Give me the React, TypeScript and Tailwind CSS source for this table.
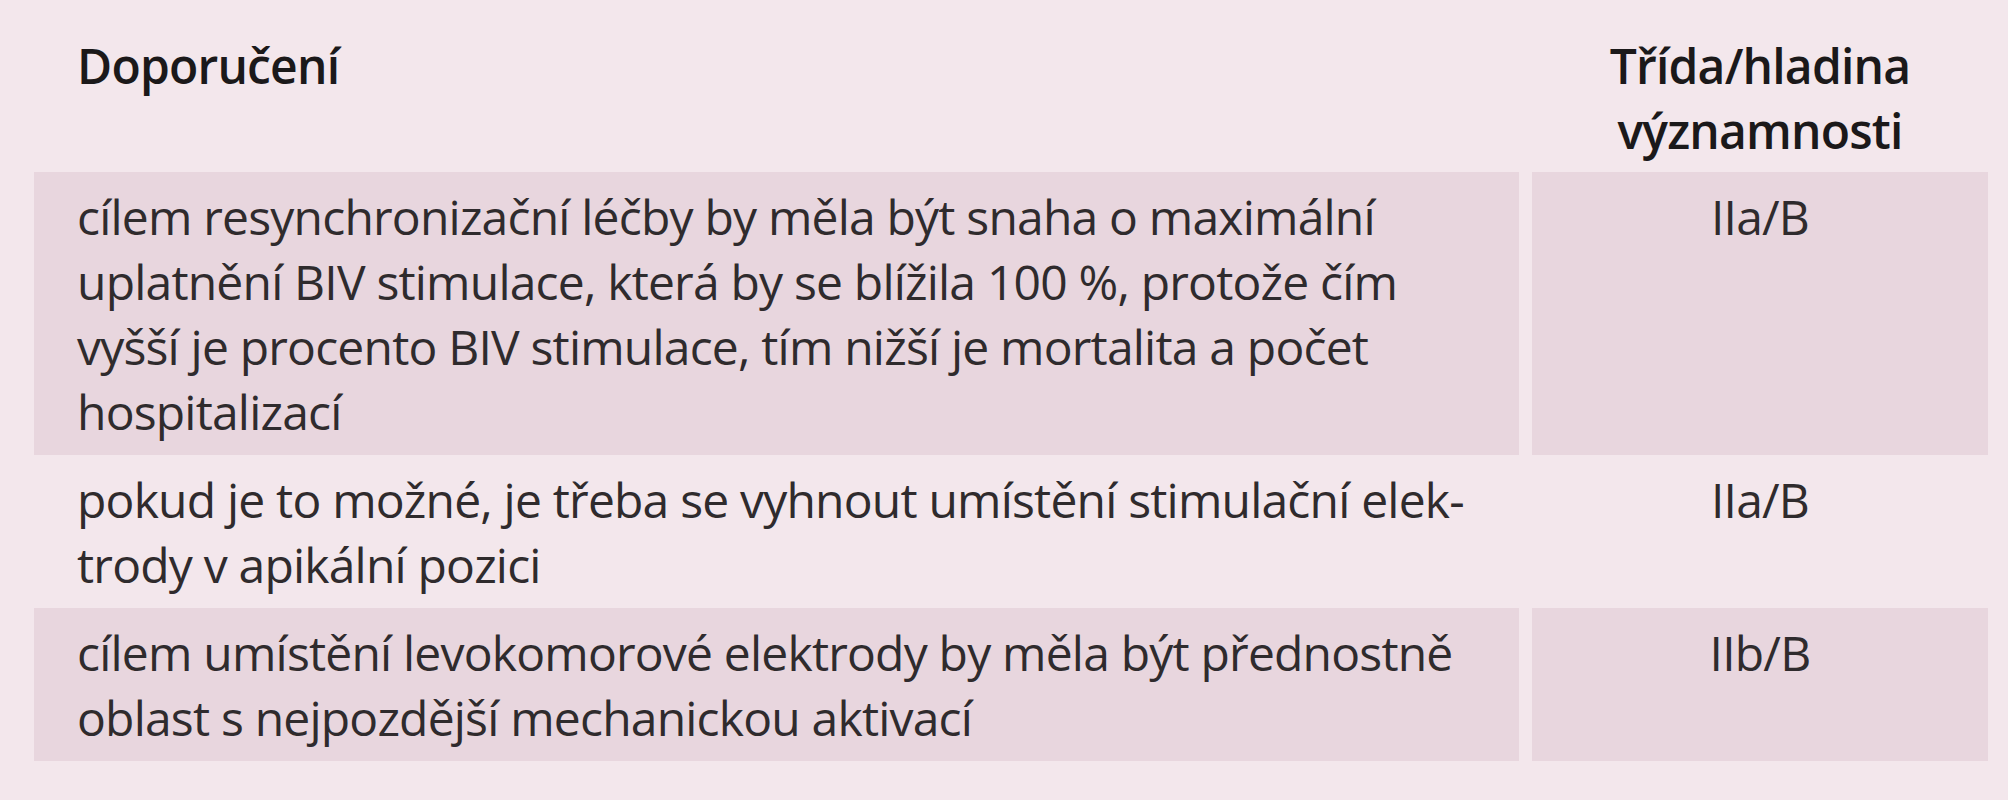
const rows = [
  {
    lines: [
      "cílem resynchronizační léčby by měla být snaha o maximální",
      "uplatnění BIV stimulace, která by se blížila 100 %, protože čím",
      "vyšší je procento BIV stimulace, tím nižší je mortalita a počet",
      "hospitalizací",
    ],
    grade: "IIa/B",
    shaded: true,
  },
  {
    lines: [
      "pokud je to možné, je třeba se vyhnout umístění stimulační elek-",
      "trody v apikální pozici",
    ],
    grade: "IIa/B",
    shaded: false,
  },
  {
    lines: [
      "cílem umístění levokomorové elektrody by měla být přednostně",
      "oblast s nejpozdější mechanickou aktivací",
    ],
    grade: "IIb/B",
    shaded: true,
  },
];

export default function App() {
  return (
    <div className="w-[2008px] h-[800px] bg-[#f3e7ec] pl-[34px] pr-[20px] font-['Open_Sans',sans-serif] text-[48px] leading-[65px] tracking-[-0.8px] text-[#2f2b2d]">
      <div className="grid grid-cols-[1485px_456px] gap-x-[13px]">
        <div className="pt-[33px] pb-[9px] pl-[43px] font-semibold text-[#1b191a]">
          Doporučení
        </div>
        <div className="pt-[33px] pb-[9px] text-center font-semibold text-[#1b191a]">
          Třída/hladina
          <br />
          významnosti
        </div>

        {rows.map((r, i) => (
          <div key={i} className="contents">
            <div
              className={
                "pt-[12px] pb-[11px] pl-[43px] " +
                (r.shaded ? "bg-[#e8d6de]" : "")
              }
            >
              {r.lines.map((l, j) => (
                <div key={j} className="whitespace-nowrap">
                  {l}
                </div>
              ))}
            </div>
            <div
              className={
                "pt-[12px] pb-[11px] text-center " +
                (r.shaded ? "bg-[#e8d6de]" : "")
              }
            >
              {r.grade}
            </div>
          </div>
        ))}
      </div>
    </div>
  );
}
